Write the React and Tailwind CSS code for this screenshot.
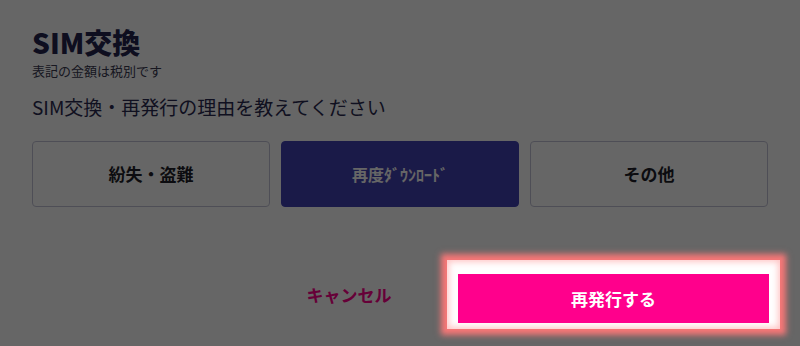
const reasons = [
  { label: "紛失・盗難", selected: false },
  { label: "再度ﾀﾞｳﾝﾛｰﾄﾞ", selected: true },
  { label: "その他", selected: false },
];

function ReasonButton({ label, selected }) {
  return (
    <button
      type="button"
      className={
        selected
          ? "h-[66px] rounded-[4px] border border-[#4242b4] bg-[#4242b4] text-[16px] font-bold text-white"
          : "h-[66px] rounded-[4px] border border-[#c4c4d8] bg-white text-[17px] font-bold text-[#1f1f2a]"
      }
    >
      {label}
    </button>
  );
}

export default function App() {
  return (
    <div
      className="relative h-[346px] w-[800px] overflow-hidden bg-white px-[32px] pt-[26px]"
      style={{ fontFamily: '"Noto Sans CJK JP", "Noto Sans", sans-serif' }}
    >
      <h1 className="text-[28px] font-black leading-[33px] text-[#25254f]">SIM交換</h1>
      <p className="mt-[4px] text-[13px] leading-[16px] text-[#3a3a52]">表記の金額は税別です</p>
      <p className="mt-[16px] text-[19px] leading-[24px] text-[#2a2a50]">
        SIM交換・再発行の理由を教えてください
      </p>

      <div className="mt-[22px] grid grid-cols-3 gap-[11px]">
        {reasons.map((r) => (
          <ReasonButton key={r.label} label={r.label} selected={r.selected} />
        ))}
      </div>

      <div className="mt-[53px] flex items-center justify-end">
        <button type="button" className="w-[160px] text-[17px] font-bold text-[#ff008c]">
          キャンセル
        </button>
        <div className="relative z-10 -mr-[12px] ml-[18px] bg-white px-[11px] pb-[6px] pt-[14px] shadow-[0_0_6px_6px_rgba(255,120,120,0.95),inset_0_0_6px_2px_rgba(255,150,150,0.55)]">
          <button
            type="button"
            className="h-[49px] w-[311px] bg-[#ff008c] text-[17px] font-bold text-white"
          >
            再発行する
          </button>
        </div>
      </div>

      {/* dim overlay, the highlighted button sits above it */}
      <div className="absolute inset-0 bg-black/60" />
    </div>
  );
}
